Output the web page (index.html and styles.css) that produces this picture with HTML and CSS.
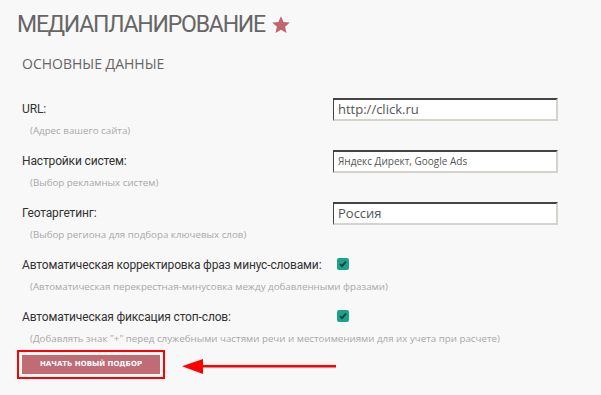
FILE: index.html
```html
<!DOCTYPE html>
<html lang="ru">
<head>
<meta charset="utf-8">
<link rel="stylesheet" href="styles.css">
</head>
<body>
<div class="page">
  <h1 class="title">МЕДИАПЛАНИРОВАНИЕ <svg class="star" viewBox="0 0 24 24" width="20" height="20"><path d="M12 1.5l3.1 6.9 7.4.7-5.6 5 1.7 7.4L12 17.6l-6.6 3.9 1.7-7.4-5.6-5 7.4-.7z" fill="#c0666e"/></svg></h1>
  <h2 class="subtitle">ОСНОВНЫЕ ДАННЫЕ</h2>

  <div class="form">
    <div class="row">
      <div class="label">URL:</div>
      <div class="field"><div class="input">http://click.ru</div></div>
      <div class="hint">(Адрес вашего сайта)</div>
    </div>
    <div class="row">
      <div class="label">Настройки систем:</div>
      <div class="field"><div class="input small">Яндекс Директ, Google Ads</div></div>
      <div class="hint">(Выбор рекламных систем)</div>
    </div>
    <div class="row">
      <div class="label">Геотаргетинг:</div>
      <div class="field"><div class="input">Россия</div></div>
      <div class="hint">(Выбор региона для подбора ключевых слов)</div>
    </div>
    <div class="row">
      <div class="label">Автоматическая корректировка фраз минус-словами:</div>
      <div class="field"><span class="check"><svg viewBox="0 0 12 12" width="12" height="12"><path d="M3 6.2l2 2 4-4.6" fill="none" stroke="#1f3b36" stroke-width="1.8"/></svg></span></div>
      <div class="hint">(Автоматическая перекрестная-минусовка между добавленными фразами)</div>
    </div>
    <div class="row">
      <div class="label">Автоматическая фиксация стоп-слов:</div>
      <div class="field"><span class="check"><svg viewBox="0 0 12 12" width="12" height="12"><path d="M3 6.2l2 2 4-4.6" fill="none" stroke="#1f3b36" stroke-width="1.8"/></svg></span></div>
      <div class="hint">(Добавлять знак "+" перед служебными частями речи и местоимениями для их учета при расчете)</div>
    </div>
  </div>

  <div class="actions">
    <div class="highlight"><button class="btn">НАЧАТЬ НОВЫЙ ПОДБОР</button></div>
    <svg class="arrow" width="160" height="24" viewBox="0 0 160 24"><path d="M20 11h134v2.6H20z" fill="#ff0000"/><path d="M0 12.3L21 5v15z" fill="#ff0000"/></svg>
  </div>
</div>
</body>
</html>
```
FILE: styles.css
```css
html, body {
  margin: 0;
  padding: 0;
  background: #f8f8f8;
}
body {
  font-family: "Open Sans", "DejaVu Sans", sans-serif;
  color: #333;
}
.page {
  position: relative;
  width: 601px;
  height: 395px;
  overflow: hidden;
}
.title {
  margin: 0;
  padding: 10px 0 0 17px;
  font-family: Roboto, "Open Sans", sans-serif;
  font-size: 23px;
  line-height: 30px;
  font-weight: normal;
  color: #666;
  display: flex;
  align-items: center;
  gap: 6px;
  letter-spacing: -1.2px;
}
.star {
  display: block;
  margin-top: -1px;
}
.subtitle {
  margin: 0;
  padding: 15px 0 0 22px;
  font-size: 14px;
  line-height: 18px;
  font-weight: normal;
  color: #666;
}
.form {
  padding: 25px 0 0 22px;
  display: flex;
  flex-direction: column;
  gap: 10px;
}
.row {
  display: grid;
  grid-template-columns: 311px 225px;
  grid-template-rows: 23px 19px;
}
.label {
  font-family: Roboto, "Open Sans", sans-serif;
  font-size: 12px;
  letter-spacing: -0.15px;
  line-height: 23px;
  color: #333;
  white-space: nowrap;
}
.field {
  display: flex;
  align-items: center;
}
.hint {
  grid-column: 1 / 3;
  padding-left: 8px;
  font-size: 9.75px;
  line-height: 19px;
  color: #a8a8a8;
  white-space: nowrap;
}
.input {
  box-sizing: border-box;
  width: 225px;
  height: 23px;
  background: #fff;
  border-style: solid;
  border-width: 2px 2px 2px 1px;
  border-color: #444 #d6d3cc #d6d3cc #444;
  padding-left: 4px;
  font-size: 13px;
  line-height: 19px;
  color: #555;
}
.input.small {
  font-size: 10px;
}
.check {
  display: block;
  width: 12px;
  height: 12px;
  margin-left: 4px;
  margin-top: -4px;
  background: #1aa38a;
  border-radius: 2px;
}
.check svg {
  display: block;
}
.actions {
  position: relative;
  padding: 1px 0 0 17px;
}
.highlight {
  display: inline-block;
  border: 2px solid #ff0000;
  padding: 3px;
}
.btn {
  display: block;
  width: 138px;
  height: 19px;
  border: 0;
  background: #c06c74;
  color: #fff;
  font-family: "DejaVu Sans", sans-serif;
  font-weight: bold;
  font-size: 7px;
  padding: 0;
}
.arrow {
  position: absolute;
  left: 182px;
  top: 6px;
}
```
